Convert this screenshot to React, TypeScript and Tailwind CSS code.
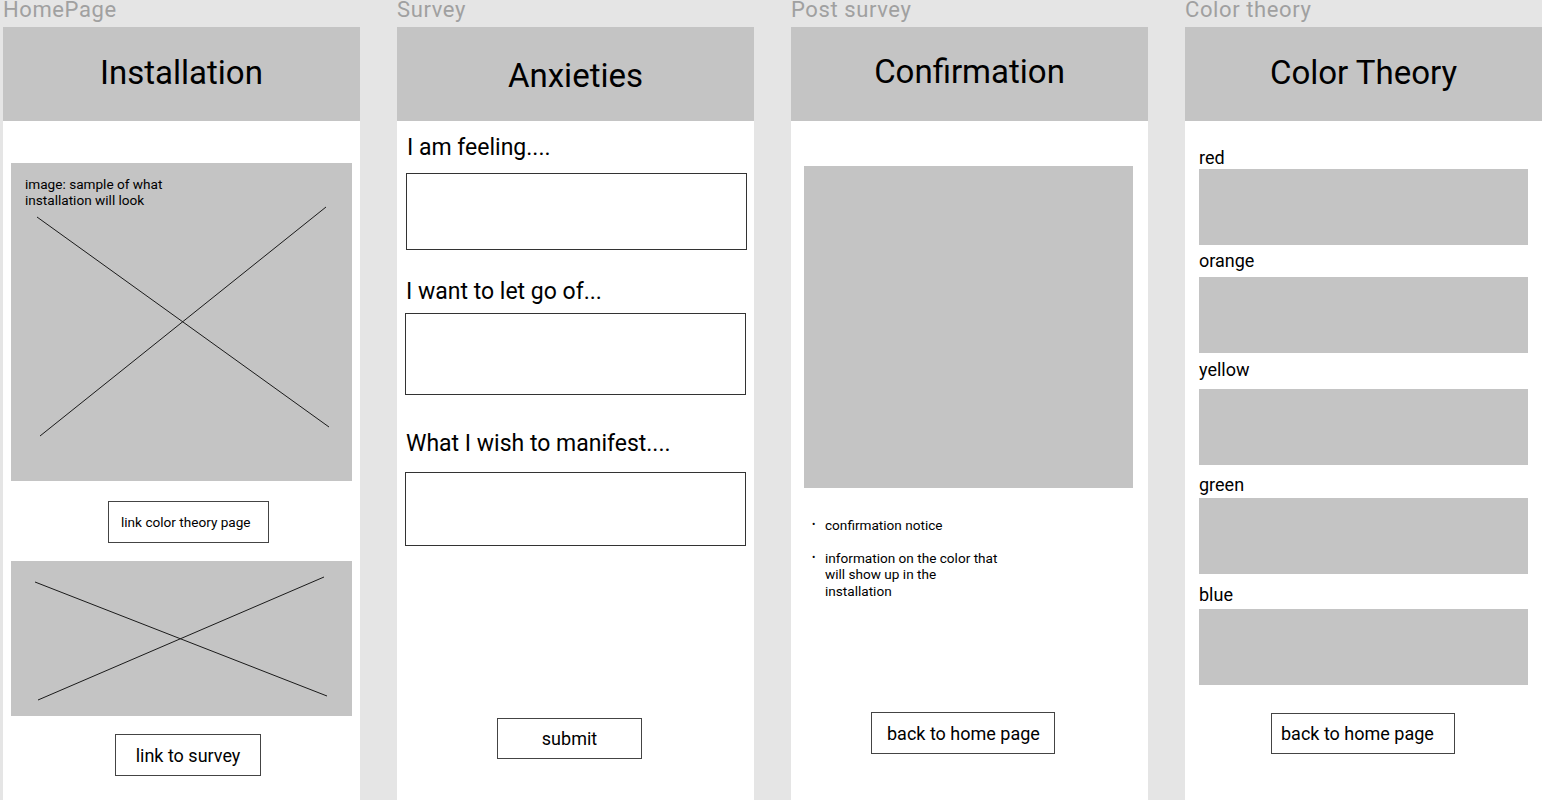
import type { ReactNode } from "react";

function Column({ label, children }: { label: string; children: ReactNode }) {
  return (
    <div className="flex w-[357px] shrink-0 flex-col">
      <div className="h-[27px] overflow-hidden text-[22px] leading-[20px] tracking-[0.6px] text-[#a0a0a0]">{label}</div>
      <div className="flex flex-1 flex-col bg-white">{children}</div>
    </div>
  );
}

function Header({ title, className }: { title: string; className: string }) {
  return (
    <div className={`flex h-[94px] shrink-0 items-center justify-center bg-[#c4c4c4] text-[33px] text-black ${className}`}>
      {title}
    </div>
  );
}

function Cross({ a, b }: { a: number[]; b: number[] }) {
  return (
    <svg className="absolute inset-0 h-full w-full" fill="none" stroke="#1a1a1a" strokeWidth="1">
      <line x1={a[0]} y1={a[1]} x2={a[2]} y2={a[3]} />
      <line x1={b[0]} y1={b[1]} x2={b[2]} y2={b[3]} />
    </svg>
  );
}

function Swatch({ label, labelMt, boxMt }: { label: string; labelMt: string; boxMt: string }) {
  return (
    <>
      <div className={`${labelMt} text-[18px] leading-[21px] text-black`}>{label}</div>
      <div className={`${boxMt} h-[76px] w-[329px] bg-[#c4c4c4]`} />
    </>
  );
}

export default function App() {
  return (
    <div
      className="flex h-[800px] gap-[37px] overflow-hidden bg-[#e5e5e5] pl-[3px]"
      style={{ fontFamily: "Roboto, 'Noto Sans', sans-serif" }}
    >
      {/* HomePage */}
      <Column label="HomePage">
        <Header title="Installation" className="pb-[2px]" />
        <div className="flex flex-col px-[8px] pt-[42px]">
          <div className="relative h-[318px] w-[341px] bg-[#c4c4c4]">
            <div className="relative z-10 pl-[14px] pt-[13px] text-[13.6px] leading-[16px] text-black">
              image: sample of what
              <br />
              installation will look
            </div>
            <Cross a={[26, 54, 318, 264]} b={[29, 273, 315, 44]} />
          </div>
          <div className="ml-[97px] mt-[20px] flex h-[42px] w-[161px] items-center border border-[#444] pl-[12px] text-[13.6px] text-black">
            link color theory page
          </div>
          <div className="relative mt-[18px] h-[155px] w-[341px] bg-[#c4c4c4]">
            <Cross a={[24, 21, 316, 135]} b={[27, 139, 313, 16]} />
          </div>
          <div className="ml-[104px] mt-[18px] flex h-[42px] w-[146px] items-center justify-center border border-[#444] text-[18px] text-black">
            link to survey
          </div>
        </div>
      </Column>

      {/* Survey */}
      <Column label="Survey">
        <Header title="Anxieties" className="pt-[3px]" />
        <div className="flex flex-col text-[23px] leading-[28px] text-black">
          <div className="ml-[10px] mt-[13px]">I am feeling....</div>
          <div className="ml-[9px] mt-[11px] h-[77px] w-[341px] border border-[#333]" />
          <div className="ml-[9px] mt-[28px]">I want to let go of...</div>
          <div className="ml-[8px] mt-[7px] h-[82px] w-[341px] border border-[#333]" />
          <div className="ml-[9px] mt-[35px]">What I wish to manifest....</div>
          <div className="ml-[8px] mt-[14px] h-[74px] w-[341px] border border-[#333]" />
          <div className="ml-[100px] mt-[172px] flex h-[41px] w-[145px] items-center justify-center border border-[#444] text-[18px] leading-none">
            submit
          </div>
        </div>
      </Column>

      {/* Post survey */}
      <Column label="Post survey">
        <Header title="Confirmation" className="pb-[4px]" />
        <div className="flex flex-col">
          <div className="ml-[13px] mt-[45px] h-[322px] w-[329px] bg-[#c4c4c4]" />
          <ul className="ml-[21px] mt-[29px] flex flex-col gap-[16px] text-[13.6px] leading-[16.5px] text-black">
            <li className="flex">
              <span className="w-[13px] text-[10px]">•</span>
              <span>confirmation notice</span>
            </li>
            <li className="flex">
              <span className="w-[13px] text-[10px]">•</span>
              <span>
                information on the color that
                <br />
                will show up in the
                <br />
                installation
              </span>
            </li>
          </ul>
          <div className="ml-[80px] mt-[113px] flex h-[42px] w-[184px] items-center border border-[#444] pl-[15px] text-[18px] text-black">
            back to home page
          </div>
        </div>
      </Column>

      {/* Color theory */}
      <Column label="Color theory">
        <Header title="Color Theory" className="h-[93px] pb-[3px]" />
        <div className="flex flex-col px-[14px]">
          <Swatch label="red" labelMt="mt-[26px]" boxMt="mt-[1px]" />
          <Swatch label="orange" labelMt="mt-[5px]" boxMt="mt-[6px]" />
          <Swatch label="yellow" labelMt="mt-[6px]" boxMt="mt-[9px]" />
          <Swatch label="green" labelMt="mt-[9px]" boxMt="mt-[3px]" />
          <Swatch label="blue" labelMt="mt-[10px]" boxMt="mt-[4px]" />
          <div className="ml-[72px] mt-[28px] flex h-[41px] w-[184px] items-center border border-[#444] pl-[9px] text-[18px] text-black">
            back to home page
          </div>
        </div>
      </Column>
    </div>
  );
}
